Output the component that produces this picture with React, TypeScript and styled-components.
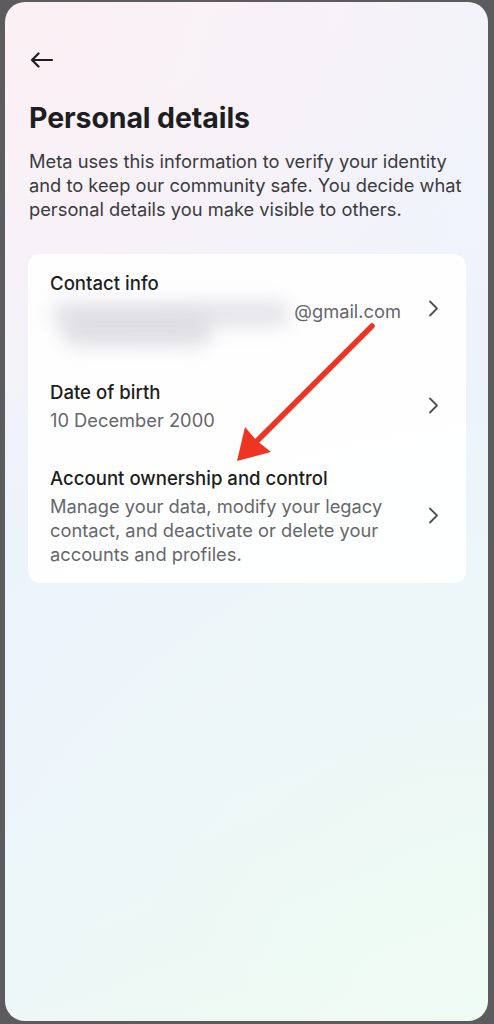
import { createGlobalStyle, styled } from 'styled-components';

const GlobalStyle = createGlobalStyle`
  html, body {
    margin: 0;
    padding: 0;
    background: #5c5c5e;
  }
  body {
    font-family: Inter, 'Noto Sans', 'Liberation Sans', sans-serif;
    -webkit-font-smoothing: antialiased;
  }
`;

const Screen = styled.div`
  box-sizing: border-box;
  height: 1019px;
  margin: 2px 6px 3px 5px;
  border-radius: 20px;
  overflow: hidden;
  padding: 44px 24px 0 24px;
  background:
    radial-gradient(circle at 0% 0%, rgba(252, 240, 244, 0.95) 0, rgba(252, 240, 246, 0) 45%),
    radial-gradient(circle at 100% 100%, rgba(238, 251, 243, 0.95) 0, rgba(238, 251, 243, 0) 55%),
    linear-gradient(160deg, #f6f4fa 0%, #eef3fb 40%, #ecf4fb 70%, #eff9f4 100%);
`;

const BackButton = styled.button`
  display: flex;
  align-items: center;
  justify-content: center;
  width: 24px;
  height: 28px;
  padding: 0;
  margin: 0 0 0 1px;
  border: none;
  background: transparent;
  color: #1c1e21;
`;

const Title = styled.h1`
  margin: 27px 0 0 0;
  font-size: 28.5px;
  line-height: 34px;
  font-weight: 700;
  letter-spacing: -0.1px;
  color: #1c1e21;
`;

const Intro = styled.p`
  margin: 14px 0 0 0;
  font-size: 18.3px;
  line-height: 24px;
  font-weight: 400;
  color: #3a3b3e;
`;

const Card = styled.div`
  position: relative;
  margin: 33px -2px 0 -1px;
  border-radius: 12px;
  background: rgba(255, 255, 255, 0.92);
  padding: 0;
`;

const Row = styled.div`
  display: flex;
  align-items: center;
  padding: 16px 27px 17px 22px;
`;

const RowText = styled.div`
  flex: 1;
  min-width: 0;
  display: flex;
  flex-direction: column;
`;

const RowTitle = styled.div`
  font-size: 18.6px;
  line-height: 26px;
  font-weight: 500;
  color: #1c1e21;
  margin-bottom: 3px;
`;

const RowSub = styled.div`
  font-size: 18.3px;
  line-height: 24px;
  font-weight: 400;
  color: #65676b;
`;

const EmailLine = styled.div`
  position: relative;
  display: flex;
  justify-content: flex-end;
  padding-right: 26px;
  font-size: 18.3px;
  line-height: 24px;
  color: #65676b;
`;

const Redacted = styled.div<{ $w: number; $h: number; $l: number; $t: number; $o: number }>`
  position: absolute;
  left: ${p => p.$l}px;
  top: ${p => p.$t}px;
  width: ${p => p.$w}px;
  height: ${p => p.$h}px;
  border-radius: 16px;
  background: rgba(214, 214, 218, ${p => p.$o});
  filter: blur(9px);
`;

const HiddenLine = styled.div`
  height: 23px;
`;

const Chevron = styled.div`
  display: flex;
  width: 12px;
  justify-content: center;
  color: #4e4f53;
`;

const ArrowOverlay = styled.svg`
  position: absolute;
  left: 0;
  top: 0;
  pointer-events: none;
`;

const ChevronIcon = () => (
  <Chevron>
    <svg width="11" height="17" viewBox="0 0 11 17" fill="none">
      <path d="M2 1.5 L9 8.5 L2 15.5" stroke="currentColor" strokeWidth="1.8" strokeLinecap="round" strokeLinejoin="round" />
    </svg>
  </Chevron>
);

export default function App() {
  return (
    <>
      <GlobalStyle />
      <Screen>
        <BackButton aria-label="Back">
          <svg width="24" height="16" viewBox="0 0 24 16" fill="none">
            <path d="M22 8 H2 M8.5 1.5 L2 8 L8.5 14.5" stroke="currentColor" strokeWidth="2.2" strokeLinecap="round" strokeLinejoin="round" />
          </svg>
        </BackButton>
        <Title>Personal details</Title>
        <Intro>
          Meta uses this information to verify your identity and to keep our community safe. You decide what personal
          details you make visible to others.
        </Intro>
        <Card>
          <Row>
            <RowText>
              <RowTitle>Contact info</RowTitle>
              <EmailLine>
                <Redacted $l={0} $t={2} $w={240} $h={26} $o={0.6} />
                <Redacted $l={12} $t={16} $w={150} $h={32} $o={0.7} />
                <span style={{ position: 'relative' }}>@gmail.com</span>
              </EmailLine>
              <HiddenLine />
            </RowText>
            <ChevronIcon />
          </Row>
          <Row>
            <RowText>
              <RowTitle>Date of birth</RowTitle>
              <RowSub>10 December 2000</RowSub>
            </RowText>
            <ChevronIcon />
          </Row>
          <Row>
            <RowText>
              <RowTitle>Account ownership and control</RowTitle>
              <RowSub>
                Manage your data, modify your legacy contact, and deactivate or delete your accounts and profiles.
              </RowSub>
            </RowText>
            <ChevronIcon />
          </Row>
          <ArrowOverlay width="438" height="328" viewBox="0 0 438 328">
            <line x1="344" y1="72" x2="226" y2="190" stroke="#ee3524" strokeWidth="5.5" strokeLinecap="round" />
            <polygon points="209,207 217,173 228,186 243,198" fill="#ee3524" strokeLinejoin="round" />
          </ArrowOverlay>
        </Card>
      </Screen>
    </>
  );
}
